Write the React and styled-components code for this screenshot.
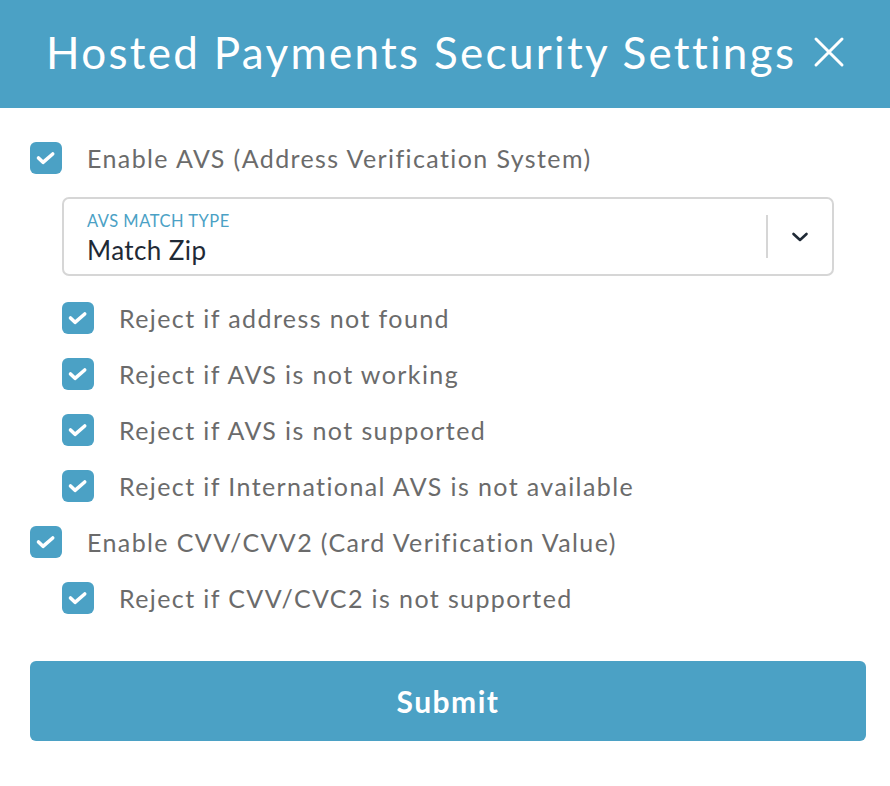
import React from 'react';
import styled, { createGlobalStyle } from 'styled-components';

const GlobalStyle = createGlobalStyle`
  body {
    margin: 0;
    background: #ffffff;
    font-family: 'Lato', 'Open Sans', sans-serif;
  }
`;

const options = [
  { label: 'Reject if address not found' },
  { label: 'Reject if AVS is not working' },
  { label: 'Reject if AVS is not supported' },
  { label: 'Reject if International AVS is not available' },
];

const Check = () => (
  <CheckBox>
    <svg width="32" height="32" viewBox="0 0 32 32">
      <path
        d="M8.5 16 L13 20.3 L22.7 12"
        fill="none"
        stroke="#fff"
        strokeWidth="3.6"
        strokeLinecap="round"
        strokeLinejoin="round"
      />
    </svg>
  </CheckBox>
);

const CheckRow = ({ label, nested }) => (
  <Row nested={nested ? 1 : 0}>
    <Check />
    <RowLabel>{label}</RowLabel>
  </Row>
);

const App = () => (
  <React.Fragment>
    <GlobalStyle />
    <Modal>
      <Header>
        <Title>Hosted Payments Security Settings</Title>
        <CloseButton aria-label="Close">
          <svg width="32" height="32" viewBox="0 0 32 32">
            <path
              d="M3 3 L29 29 M29 3 L3 29"
              stroke="#fff"
              strokeWidth="3"
              strokeLinecap="round"
            />
          </svg>
        </CloseButton>
      </Header>
      <Body>
        <CheckRow label="Enable AVS (Address Verification System)" />
        <SelectBox>
          <SelectText>
            <SelectLabel>AVS MATCH TYPE</SelectLabel>
            <SelectValue>Match Zip</SelectValue>
          </SelectText>
          <Divider />
          <Chevron>
            <svg width="18" height="10" viewBox="0 0 18 10">
              <path
                d="M2.5 2 L9 8 L15.5 2"
                fill="none"
                stroke="#1f2a36"
                strokeWidth="2.6"
                strokeLinecap="round"
                strokeLinejoin="round"
              />
            </svg>
          </Chevron>
        </SelectBox>
        {options.map((o) => (
          <CheckRow key={o.label} label={o.label} nested />
        ))}
        <CheckRow label="Enable CVV/CVV2 (Card Verification Value)" />
        <CheckRow label="Reject if CVV/CVC2 is not supported" nested />
        <SubmitButton>Submit</SubmitButton>
      </Body>
    </Modal>
  </React.Fragment>
);

export default App;

const Modal = styled.div`
  width: 890px;
  height: 786px;
  background: #fff;
`;

const Header = styled.div`
  display: flex;
  align-items: center;
  justify-content: space-between;
  height: 108px;
  background: #4ba1c5;
  padding: 0 45px 5px 46px;
  box-sizing: border-box;
`;

const Title = styled.h1`
  margin: 0;
  color: #fff;
  font-size: 44px;
  font-weight: 400;
  letter-spacing: 2.3px;
`;

const CloseButton = styled.button`
  display: flex;
  background: none;
  border: none;
  padding: 0;
  cursor: pointer;
`;

const Body = styled.div`
  display: flex;
  flex-direction: column;
  padding: 22px 24px 0 30px;
`;

const Row = styled.div`
  display: flex;
  align-items: center;
  height: 56px;
  padding-left: ${(p) => (p.nested ? '32px' : '0')};
`;

const CheckBox = styled.span`
  display: flex;
  width: 32px;
  height: 32px;
  border-radius: 6px;
  background: #4ba1c5;
  flex-shrink: 0;
`;

const RowLabel = styled.span`
  margin-left: 25px;
  font-size: 25px;
  letter-spacing: 1.4px;
  color: #6b6b6b;
`;

const SelectBox = styled.div`
  display: flex;
  align-items: center;
  margin: 11px 32px 14px 32px;
  height: 79px;
  border: 2px solid #d6d6d6;
  border-radius: 7px;
  box-sizing: border-box;
`;

const SelectText = styled.div`
  flex: 1;
  display: flex;
  flex-direction: column;
  padding: 3px 0 0 23px;
`;

const SelectLabel = styled.span`
  font-size: 16.5px;
  letter-spacing: 0.5px;
  color: #4ba1c5;
  line-height: 18px;
`;

const SelectValue = styled.span`
  margin-top: 5px;
  font-size: 26px;
  letter-spacing: 0.4px;
  color: #1f2a36;
  line-height: 30px;
`;

const Divider = styled.span`
  width: 2px;
  height: 43px;
  background: #d6d6d6;
`;

const Chevron = styled.span`
  display: flex;
  justify-content: center;
  width: 64px;
`;

const SubmitButton = styled.button`
  margin-top: 35px;
  height: 80px;
  border: none;
  border-radius: 6px;
  background: #4ba1c5;
  color: #fff;
  font-family: 'Lato', sans-serif;
  font-size: 30px;
  font-weight: 700;
  letter-spacing: 1.5px;
  cursor: pointer;
`;
